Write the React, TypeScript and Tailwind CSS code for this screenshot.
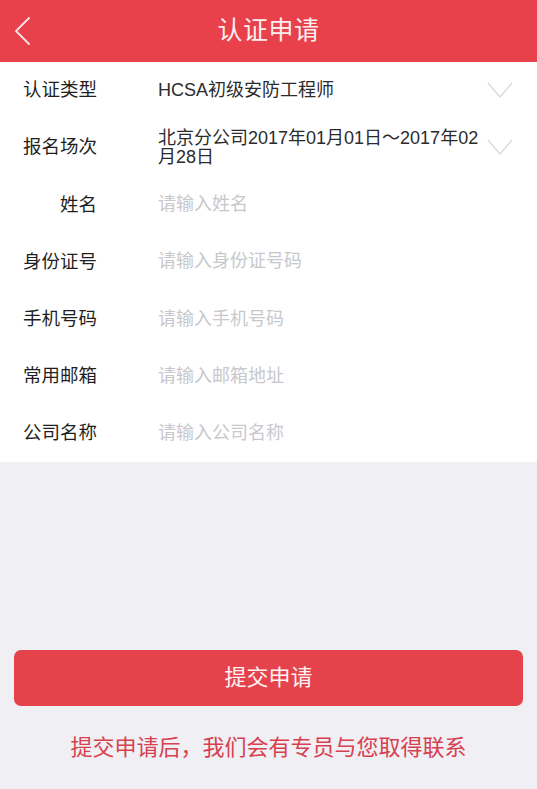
import React from "react";

const FONT = '"Liberation Sans", "Noto Sans CJK SC", sans-serif';

type Row = {
  label: string;
  value?: string;
  placeholder?: string;
  select?: boolean;
};

const rows: Row[] = [
  { label: "认证类型", value: "HCSA初级安防工程师", select: true },
  {
    label: "报名场次",
    value: "北京分公司2017年01月01日～2017年02月28日",
    select: true,
  },
  { label: "姓名", placeholder: "请输入姓名" },
  { label: "身份证号", placeholder: "请输入身份证号码" },
  { label: "手机号码", placeholder: "请输入手机号码" },
  { label: "常用邮箱", placeholder: "请输入邮箱地址" },
  { label: "公司名称", placeholder: "请输入公司名称" },
];

function ChevronDown() {
  return (
    <svg width="26" height="17" viewBox="0 0 26 17" fill="none">
      <polyline
        points="1,1 13,15 25,1"
        stroke="#d9d9d9"
        strokeWidth="1.3"
        strokeLinejoin="round"
      />
    </svg>
  );
}

function FormRow({ row }: { row: Row }) {
  return (
    <div className="flex h-[57.15px] items-center">
      <div className="w-[97px] shrink-0 text-right text-[18.5px] leading-none text-[#1f1f1f]">
        {row.label}
      </div>
      <div className="ml-[61px] w-[322px] shrink-0 text-[18px] leading-[19px]">
        {row.value ? (
          <span className="break-all text-[#2b2b2b]">{row.value}</span>
        ) : (
          <span className="text-[#c8c8cc]">{row.placeholder}</span>
        )}
      </div>
      {row.select && (
        <div className="ml-auto mr-[24px] flex items-center">
          <ChevronDown />
        </div>
      )}
    </div>
  );
}

export default function App() {
  return (
    <div
      className="flex min-h-[789px] w-full flex-col bg-[#efeff4]"
      style={{ fontFamily: FONT }}
    >
      {/* 顶部导航 */}
      <header className="relative flex h-[62px] items-center justify-center bg-[#e8414b]">
        <button className="absolute left-[12px] top-[16px] p-0">
          <svg width="20" height="30" viewBox="0 0 20 30" fill="none">
            <polyline
              points="17,2 4,15 17,28"
              stroke="#fbe3e4"
              strokeWidth="1.8"
              strokeLinecap="round"
              strokeLinejoin="round"
            />
          </svg>
        </button>
        <h1 className="text-[25px] font-normal tracking-[0.5px] text-[#fdf0f0]">
          认证申请
        </h1>
      </header>

      {/* 表单 */}
      <section className="bg-white">
        {rows.map((row) => (
          <FormRow key={row.label} row={row} />
        ))}
      </section>

      <div className="mt-[188px] px-[14px]">
        <button className="flex h-[56px] w-full items-center justify-center rounded-[7px] bg-[#e5434c] text-[22px] text-[#fff3f3]">
          提交申请
        </button>
      </div>

      <p className="mt-[27px] text-center text-[22px] leading-[30px] text-[#d8404f]">
        提交申请后，我们会有专员与您取得联系
      </p>
    </div>
  );
}
